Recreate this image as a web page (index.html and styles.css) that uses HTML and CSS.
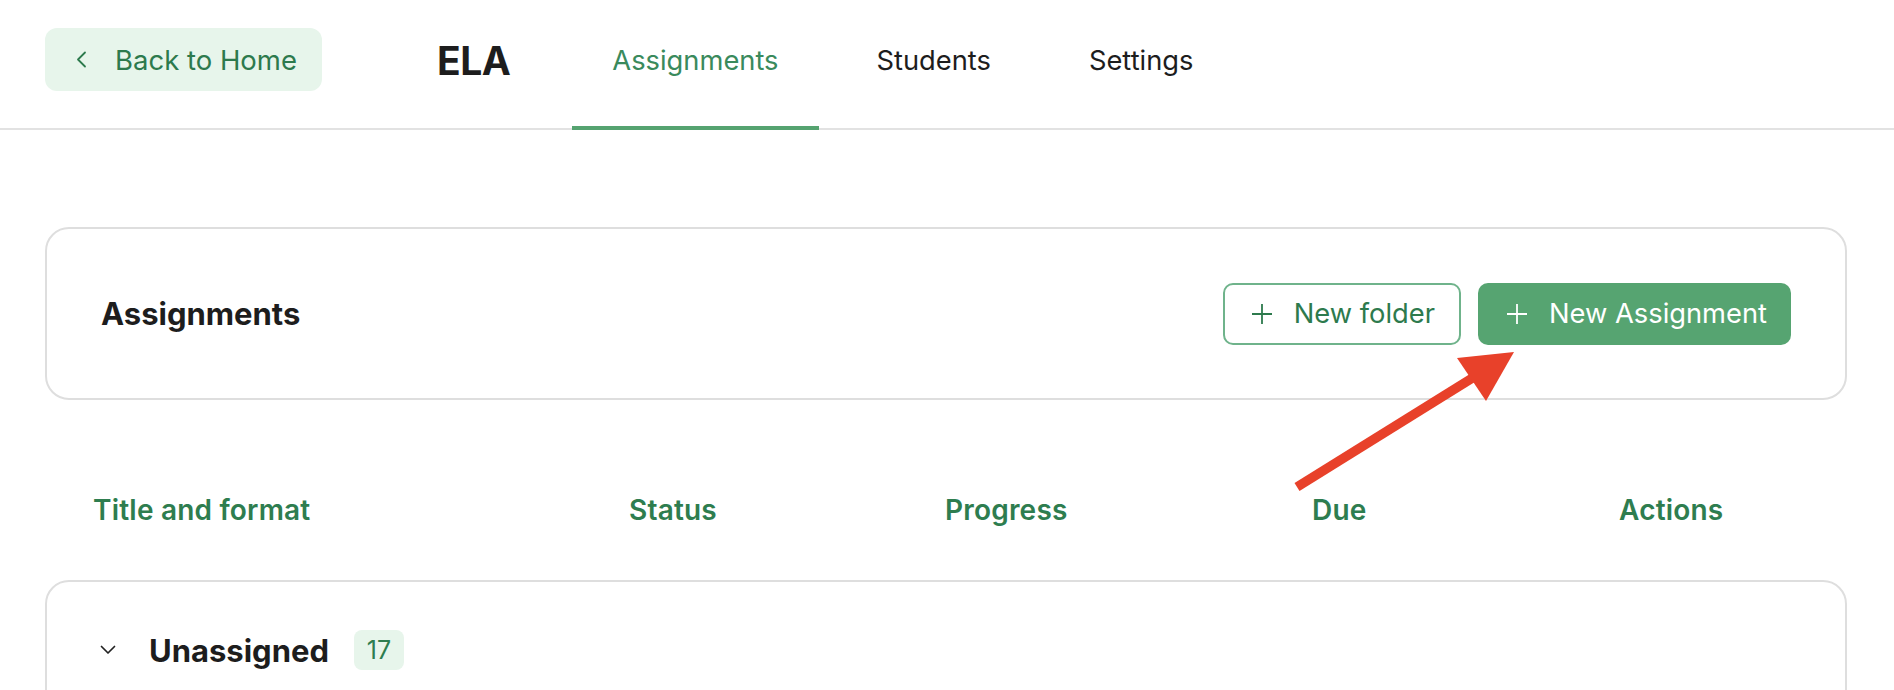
FILE: index.html
```html
<!DOCTYPE html>
<html lang="en">
<head>
<meta charset="utf-8">
<title>ELA - Assignments</title>
<link rel="stylesheet" href="styles.css">
</head>
<body>
<header class="topbar">
  <a class="back-btn" href="#">
    <svg class="chev-left" width="11" height="17" viewBox="0 0 11 17"><path d="M9 1.5 L2 8.5 L9 15.5" fill="none" stroke="currentColor" stroke-width="1.8" stroke-linecap="round" stroke-linejoin="round"/></svg>
    <span>Back to Home</span>
  </a>
  <h1 class="course">ELA</h1>
  <nav class="tabs">
    <a class="tab active" href="#">Assignments</a>
    <a class="tab" href="#">Students</a>
    <a class="tab" href="#">Settings</a>
  </nav>
</header>

<main class="content">
  <section class="card head-card">
    <h2 class="head-title">Assignments</h2>
    <div class="actions">
      <button class="btn btn-outline">
        <svg width="22" height="22" viewBox="0 0 22 22"><path d="M11 1V21M1 11H21" fill="none" stroke="currentColor" stroke-width="1.8"/></svg>
        <span>New folder</span>
      </button>
      <button class="btn btn-primary">
        <svg width="22" height="22" viewBox="0 0 22 22"><path d="M11 1V21M1 11H21" fill="none" stroke="currentColor" stroke-width="1.8"/></svg>
        <span>New Assignment</span>
      </button>
    </div>
  </section>

  <div class="columns">
    <div class="col">Title and format</div>
    <div class="col">Status</div>
    <div class="col">Progress</div>
    <div class="col">Due</div>
    <div class="col">Actions</div>
  </div>

  <section class="card group">
    <div class="group-head">
      <svg class="chev-down" width="16" height="10" viewBox="0 0 16 10"><path d="M1.5 1.5 L8 8 L14.5 1.5" fill="none" stroke="currentColor" stroke-width="1.7" stroke-linecap="round" stroke-linejoin="round"/></svg>
      <span class="group-title">Unassigned</span>
      <span class="badge">17</span>
    </div>
  </section>
</main>

<svg class="annotation" width="1894" height="690" viewBox="0 0 1894 690">
  <line x1="1297" y1="487" x2="1474" y2="377" stroke="#e8412a" stroke-width="9.5"/>
  <polygon points="1457,358 1514,352 1486,401" fill="#e8412a"/>
</svg>
</body>
</html>
```

FILE: styles.css
```css
* { box-sizing: border-box; }

html, body {
  margin: 0;
  padding: 0;
  background: #ffffff;
  font-family: Inter, "Noto Sans", "Liberation Sans", sans-serif;
  color: #1d1d1d;
  overflow: hidden;
}

body { width: 1894px; height: 690px; position: relative; }

a { text-decoration: none; color: inherit; }

/* Top bar */
.topbar {
  display: flex;
  align-items: flex-start;
  height: 130px;
  padding-left: 45px;
  border-bottom: 2px solid #e2e2e2;
}

.back-btn {
  display: flex;
  align-items: center;
  gap: 28px;
  margin-top: 28px;
  height: 63px;
  width: 277px;
  padding-left: 31px;
  border-radius: 12px;
  background: #e7f5eb;
  color: #2d7a4d;
  font-size: 27.5px;
  font-weight: 400;
}

.chev-left { flex: none; }

.course {
  margin: 0 0 0 115px;
  height: 120px;
  display: flex;
  align-items: center;
  font-size: 39px;
  font-weight: 700;
  color: #1d1d1d;
  letter-spacing: -0.5px;
}

.tabs {
  display: flex;
  gap: 18px;
  margin-left: 62px;
}

.tab {
  display: flex;
  align-items: center;
  height: 130px;
  padding: 0 40px 6px;
  border-bottom: 4px solid transparent;
  font-size: 27.3px;
  color: #1d1d1d;
}

.tab.active {
  color: #3a8a5c;
  border-bottom-color: #55a370;
}

/* Content */
.content {
  padding: 97px 47px 0 45px;
}

.card {
  border: 2px solid #dedede;
  border-radius: 24px;
  background: #fff;
}

.head-card {
  height: 173px;
  display: flex;
  align-items: center;
  justify-content: space-between;
  padding: 0 54px;
}

.head-title {
  margin: 0;
  font-size: 31px;
  font-weight: 700;
  color: #1d1d1d;
}

.actions {
  display: flex;
  gap: 17px;
}

.btn {
  display: flex;
  align-items: center;
  gap: 21px;
  height: 62px;
  padding: 0 24px 0 28px;
  border-radius: 10px;
  font-family: inherit;
  font-size: 27.3px;
  font-weight: 400;
  cursor: pointer;
}

.btn-outline {
  background: #fff;
  border: 2px solid #6fb38b;
  color: #2d7a4d;
  padding-left: 26px;
}

.btn-primary {
  background: #56a471;
  border: none;
  color: #ffffff;
}

.columns {
  display: grid;
  grid-template-columns: 536px 316px 367px 307px 1fr;
  padding: 92px 0 52px 48px;
  line-height: 36px;
}

.col {
  font-size: 28px;
  font-weight: 600;
  letter-spacing: 0.2px;
  color: #2e7d4f;
}

.group {
  height: 260px;
}

.group-head {
  display: flex;
  align-items: center;
  height: 136px;
  padding-left: 53px;
}

.chev-down { color: #222; flex: none; }

.group-title {
  margin-left: 33px;
  font-size: 31px;
  font-weight: 700;
  color: #1d1d1d;
}

.badge {
  margin-left: 25px;
  width: 50px;
  height: 40px;
  display: flex;
  align-items: center;
  justify-content: center;
  border-radius: 8px;
  background: #e7f5eb;
  color: #2e7d4f;
  font-size: 25px;
}

.annotation {
  position: absolute;
  left: 0;
  top: 0;
  pointer-events: none;
}
```
